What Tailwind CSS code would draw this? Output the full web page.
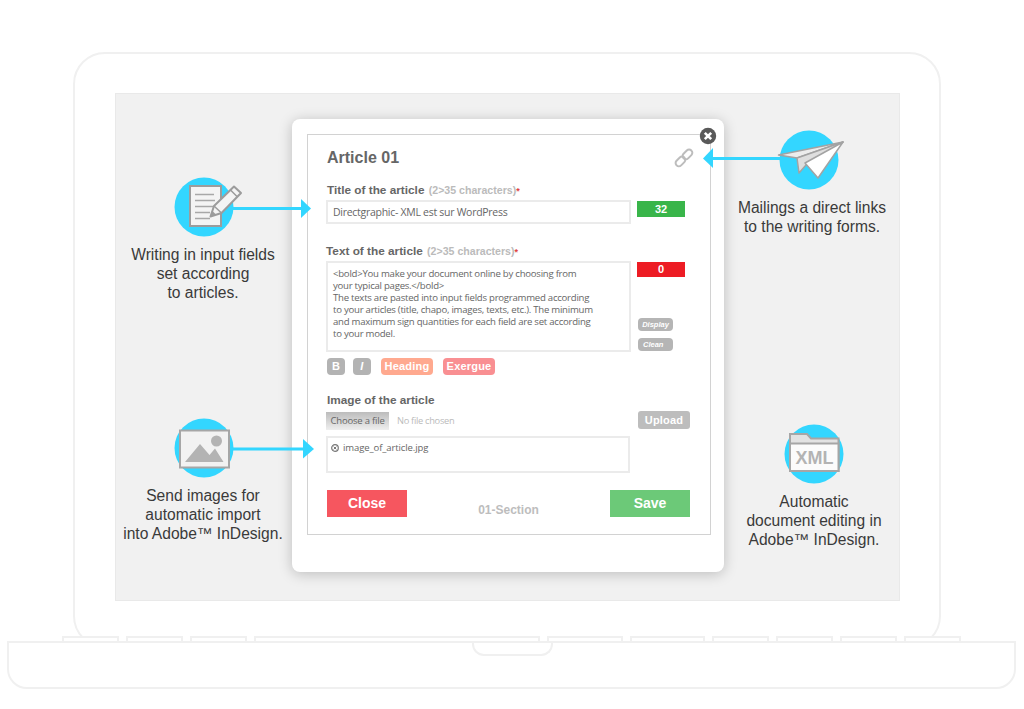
<!DOCTYPE html>
<html lang="en">
<head>
<meta charset="utf-8">
<title>Article form</title>
<script src="https://cdn.jsdelivr.net/npm/@tailwindcss/browser@4"></script>
</head>
<body class="bg-white">
<div class="relative w-[1024px] h-[709px] overflow-hidden pt-[52px] font-['Liberation_Sans',sans-serif]">

    <!-- Laptop lid and screen -->
    <div class="ml-[73px] w-[868px] h-[596px] border-2 border-[#f0f0f0] rounded-[32px] pt-[39px] pl-[40px]">
        <div class="w-[785px] h-[508px] bg-[#f1f1f1] border border-[#e9e9e9]"></div>
    </div>

    <!-- Keys -->
    <div class="relative -mt-[12px] ml-[62px] flex h-[5px]">
        <div class="w-[57px] mr-[7px] bg-white border-2 border-b-0 border-[#f0f0f0]"></div>
        <div class="w-[57px] mr-[7px] bg-white border-2 border-b-0 border-[#f0f0f0]"></div>
        <div class="w-[57px] mr-[7px] bg-white border-2 border-b-0 border-[#f0f0f0]"></div>
        <div class="w-[286px] mr-[7px] bg-white border-2 border-b-0 border-[#f0f0f0]"></div>
        <div class="w-[76px] mr-[7px] bg-white border-2 border-b-0 border-[#f0f0f0]"></div>
        <div class="w-[75px] mr-[7px] bg-white border-2 border-b-0 border-[#f0f0f0]"></div>
        <div class="w-[57px] mr-[7px] bg-white border-2 border-b-0 border-[#f0f0f0]"></div>
        <div class="w-[57px] mr-[7px] bg-white border-2 border-b-0 border-[#f0f0f0]"></div>
        <div class="w-[57px] mr-[7px] bg-white border-2 border-b-0 border-[#f0f0f0]"></div>
        <div class="w-[57px] bg-white border-2 border-b-0 border-[#f0f0f0]"></div>
    </div>

    <!-- Laptop base -->
    <div class="relative ml-[7px] w-[1009px] h-[48px] bg-white border-2 border-[#f0f0f0] rounded-b-[20px]">
        <div class="ml-[463px] -mt-[1px] w-[81px] h-[14px] border-2 border-t-0 border-[#f0f0f0] rounded-b-[12px]"></div>
    </div>

    <!-- Article modal -->
    <div class="absolute left-[292px] top-[119px] w-[432px] h-[453px] bg-white rounded-[8px] shadow-[0_2px_14px_rgba(0,0,0,0.22)] p-[15px]">
        <div class="relative w-[404px] h-[401px] border border-[#d2d2d2] pl-[18px] pr-[20px]">

            <svg class="absolute -right-[7px] -top-[8px]" width="18" height="18" viewBox="0 0 18 18">
                <circle cx="9" cy="9" r="8.200" fill="#595959"/>
                <path d="M5.800 5.800L12.200 12.200M12.200 5.800L5.800 12.200" stroke="#fff" stroke-width="2.600"/>
            </svg>

            <div class="flex items-center justify-between h-[18px] mt-[14px]">
                <h1 class="ml-[1px] text-[16px] leading-[18px] font-bold text-[#666]">Article 01</h1>
                <svg class="-mr-[4px]" width="20" height="20" viewBox="0 0 20 20" fill="none" stroke="#bdbdbd" stroke-width="2">
                    <rect x="8" y="3.200" width="11" height="6.500" rx="3.200" transform="rotate(-45 13.500 6.500)"/>
                    <rect x="1" y="10.200" width="11" height="6.500" rx="3.200" transform="rotate(-45 6.500 13.500)"/>
                </svg>
            </div>

            <div class="mt-[16px] ml-[1px] text-[11.800px] leading-[14px] font-bold text-[#666]">Title of the article <span class="ml-[1px] text-[10.600px] text-[#bbb]">(2&gt;35 characters)</span><span class="text-[9px] text-[#e04040]">*</span></div>
            <div class="flex mt-[2px]">
                <div class="w-[305px] h-[24px] border-2 border-[#ebebeb] pl-[5px] font-['Open_Sans',sans-serif] text-[10.500px] leading-[20px] tracking-[-0.280px] text-[#666]">Directgraphic- XML est sur WordPress</div>
                <div class="ml-[6px] mt-[1px] w-[48px] h-[16px] bg-[#39b54a] text-white text-[11px] leading-[16px] font-bold text-center">32</div>
            </div>

            <div class="mt-[20px] text-[11.800px] leading-[14px] font-bold text-[#666]">Text of the article <span class="ml-[1px] text-[10.600px] text-[#bbb]">(2&gt;35 characters)</span><span class="text-[9px] text-[#e04040]">*</span></div>
            <div class="flex mt-[2px]">
                <div class="w-[305px] h-[91px] border-2 border-[#ebebeb] pl-[5px] pt-[5px] font-['Open_Sans',sans-serif] text-[9.600px] leading-[12px] tracking-[-0.250px] text-[#666]">
                    &lt;bold&gt;You make your document online by choosing from<br>
                    your typical pages.&lt;/bold&gt;<br>
                    The texts are pasted into input fields programmed according<br>
                    to your articles (title, chapo, images, texts, etc.). The minimum<br>
                    and maximum sign quantities for each field are set according<br>
                    to your model.
                </div>
                <div class="ml-[6px] flex flex-col">
                    <div class="mt-[1px] w-[48px] h-[15px] bg-[#ed1c24] text-white text-[11px] leading-[15px] font-bold text-center">0</div>
                    <div class="ml-[1px] mt-[41px] w-[35px] h-[13px] rounded-[4px] bg-[#b5b5b5] text-white text-[7.500px] leading-[13px] font-bold italic text-center">Display</div>
                    <div class="ml-[1px] mt-[7px] w-[35px] h-[13px] rounded-[4px] bg-[#b5b5b5] text-white text-[7.500px] leading-[13px] font-bold italic pl-[5px]">Clean</div>
                </div>
            </div>

            <div class="flex mt-[6px] ml-[1px] text-white text-[11px] leading-[17px] font-bold tracking-[0.200px]">
                <div class="w-[18px] h-[17px] rounded-[4px] bg-[#b3b3b3] text-center">B</div>
                <div class="ml-[8px] w-[18px] h-[17px] rounded-[4px] bg-[#b3b3b3] text-center italic">I</div>
                <div class="ml-[10px] w-[52px] h-[17px] rounded-[4px] bg-[#ffa98f] text-center">Heading</div>
                <div class="ml-[10px] w-[52px] h-[17px] rounded-[4px] bg-[#f98f92] text-center">Exergue</div>
            </div>

            <div class="mt-[18px] ml-[1px] text-[11.800px] leading-[14px] font-bold text-[#666]">Image of the article</div>
            <div class="flex items-start mt-[5px]">
                <div class="w-[63px] h-[18px] bg-linear-to-b from-[#bcbcbc] to-[#efefef] font-['Open_Sans',sans-serif] text-[9.500px] leading-[18px] tracking-[-0.200px] text-[#666] text-center">Choose a file</div>
                <div class="ml-[8px] font-['Open_Sans',sans-serif] text-[9.300px] leading-[18px] tracking-[-0.300px] text-[#bbb]">No file chosen</div>
                <div class="ml-auto -mt-[1px] w-[52px] h-[18px] rounded-[3px] bg-[#bdbdbd] text-white text-[11px] leading-[18px] font-bold text-center tracking-[0.200px]">Upload</div>
            </div>
            <div class="flex items-start w-[304px] h-[37px] mt-[6px] border-2 border-[#ebebeb] pl-[3px] pt-[3px] font-['Open_Sans',sans-serif] text-[9.500px] leading-[13px] tracking-[-0.100px] text-[#666]">
                <svg class="mt-[3px]" width="8" height="8" viewBox="0 0 8 8">
                    <circle cx="4" cy="4" r="3.300" fill="none" stroke="#777" stroke-width="1.200"/>
                    <path d="M2.600 2.600L5.400 5.400M5.400 2.600L2.600 5.400" stroke="#777"/>
                </svg>
                <span class="ml-[4px]">image_of_article.jpg</span>
            </div>

            <div class="flex items-start justify-between mt-[17px] ml-[1px]">
                <div class="w-[80px] h-[27px] bg-[#f6565f] text-white text-[14px] leading-[27px] font-bold text-center">Close</div>
                <div class="mt-[13px] text-[12px] leading-[14px] font-bold text-[#bdbdbd]">01-Section</div>
                <div class="w-[80px] h-[27px] bg-[#6cc978] text-white text-[14px] leading-[27px] font-bold text-center">Save</div>
            </div>
        </div>
    </div>

    <!-- Callout: writing -->
    <div class="absolute left-[103px] top-[245px] w-[200px] text-center text-[15.600px] leading-[19px] text-[#3a3a3a]">Writing in input fields<br>set according<br>to articles.</div>
    <svg class="absolute left-[170px] top-[175px]" width="150" height="70" viewBox="170 175 150 70">
        <circle cx="204" cy="207" r="29.500" fill="#33d6ff"/>
        <path d="M232 208.500H302" stroke="#33d6ff" stroke-width="3"/>
        <path d="M301 199L311 208.500L301 218Z" fill="#33d6ff"/>
        <rect x="190" y="186" width="31" height="40" fill="#f4f4f4" stroke="#9c9c9c" stroke-width="2"/>
        <path d="M195 194.500H214M195 200.500H215M195 206.500H214M195 212.500H210M195 218.500H210" stroke="#a8a8a8" stroke-width="1.500"/>
        <path d="M210.500 216.500L214 206L234 186.500L241 193L221.500 213Z" fill="#f4f4f4" stroke="#9c9c9c" stroke-width="2" stroke-linejoin="round"/>
        <path d="M230.500 190L237.500 197M214 206L221.500 213" stroke="#9c9c9c" stroke-width="1.500"/>
        <path d="M210.500 216.500L212.500 211L216 214.500Z" fill="#9c9c9c"/>
    </svg>

    <!-- Callout: images -->
    <div class="absolute left-[103px] top-[486px] w-[200px] text-center text-[15.600px] leading-[19px] text-[#3a3a3a]">Send images for<br>automatic import<br>into Adobe™ InDesign.</div>
    <svg class="absolute left-[170px] top-[415px]" width="150" height="70" viewBox="170 415 150 70">
        <circle cx="204" cy="448" r="29.500" fill="#33d6ff"/>
        <path d="M230 449H304" stroke="#33d6ff" stroke-width="3"/>
        <path d="M303 439L314 449L303 458.500Z" fill="#33d6ff"/>
        <rect x="180" y="430.500" width="49" height="37" fill="#f2f2f2" stroke="#a6a6a6" stroke-width="2"/>
        <circle cx="216.500" cy="441" r="5.500" fill="#b3b3b3"/>
        <path d="M185 462L200 444L209.500 455L215 448.500L223.500 462Z" fill="#b3b3b3"/>
    </svg>

    <!-- Callout: mailing -->
    <div class="absolute left-[712px] top-[198px] w-[200px] text-center text-[15.600px] leading-[19px] text-[#3a3a3a]">Mailings a direct links<br>to the writing forms.</div>
    <svg class="absolute left-[695px] top-[125px]" width="155" height="70" viewBox="695 125 155 70">
        <circle cx="809" cy="160" r="29.500" fill="#33d6ff"/>
        <path d="M712 158.500H785" stroke="#33d6ff" stroke-width="3"/>
        <path d="M713 148L703 158.500L713 168Z" fill="#33d6ff"/>
        <path d="M778.500 155L843 142L797 158Z" fill="#ececec" stroke="#a3a3a3" stroke-width="1.500" stroke-linejoin="round"/>
        <path d="M797 158L799 173L806 165L843 142Z" fill="#dedede" stroke="#a3a3a3" stroke-width="1.500" stroke-linejoin="round"/>
        <path d="M843 142L805 163L818 178Z" fill="#fff" stroke="#a3a3a3" stroke-width="1.500" stroke-linejoin="round"/>
    </svg>

    <!-- Callout: XML -->
    <div class="absolute left-[714px] top-[492px] w-[200px] text-center text-[15.600px] leading-[19px] text-[#3a3a3a]">Automatic<br>document editing in<br>Adobe™ InDesign.</div>
    <svg class="absolute left-[780px] top-[420px]" width="70" height="70" viewBox="780 420 70 70">
        <circle cx="814" cy="454" r="29.500" fill="#33d6ff"/>
        <path d="M790 471V434H807L811 438.500H838.500V471Z" fill="#e2e2e2" stroke="#a6a6a6" stroke-width="2"/>
        <rect x="790" y="443.500" width="48.500" height="27.500" fill="#fbfbfb" stroke="#a6a6a6" stroke-width="2"/>
        <text x="814.500" y="463.500" text-anchor="middle" font-family="Liberation Sans" font-weight="700" font-size="18" fill="#b3b3b3">XML</text>
    </svg>
</div>
</body>
</html>
